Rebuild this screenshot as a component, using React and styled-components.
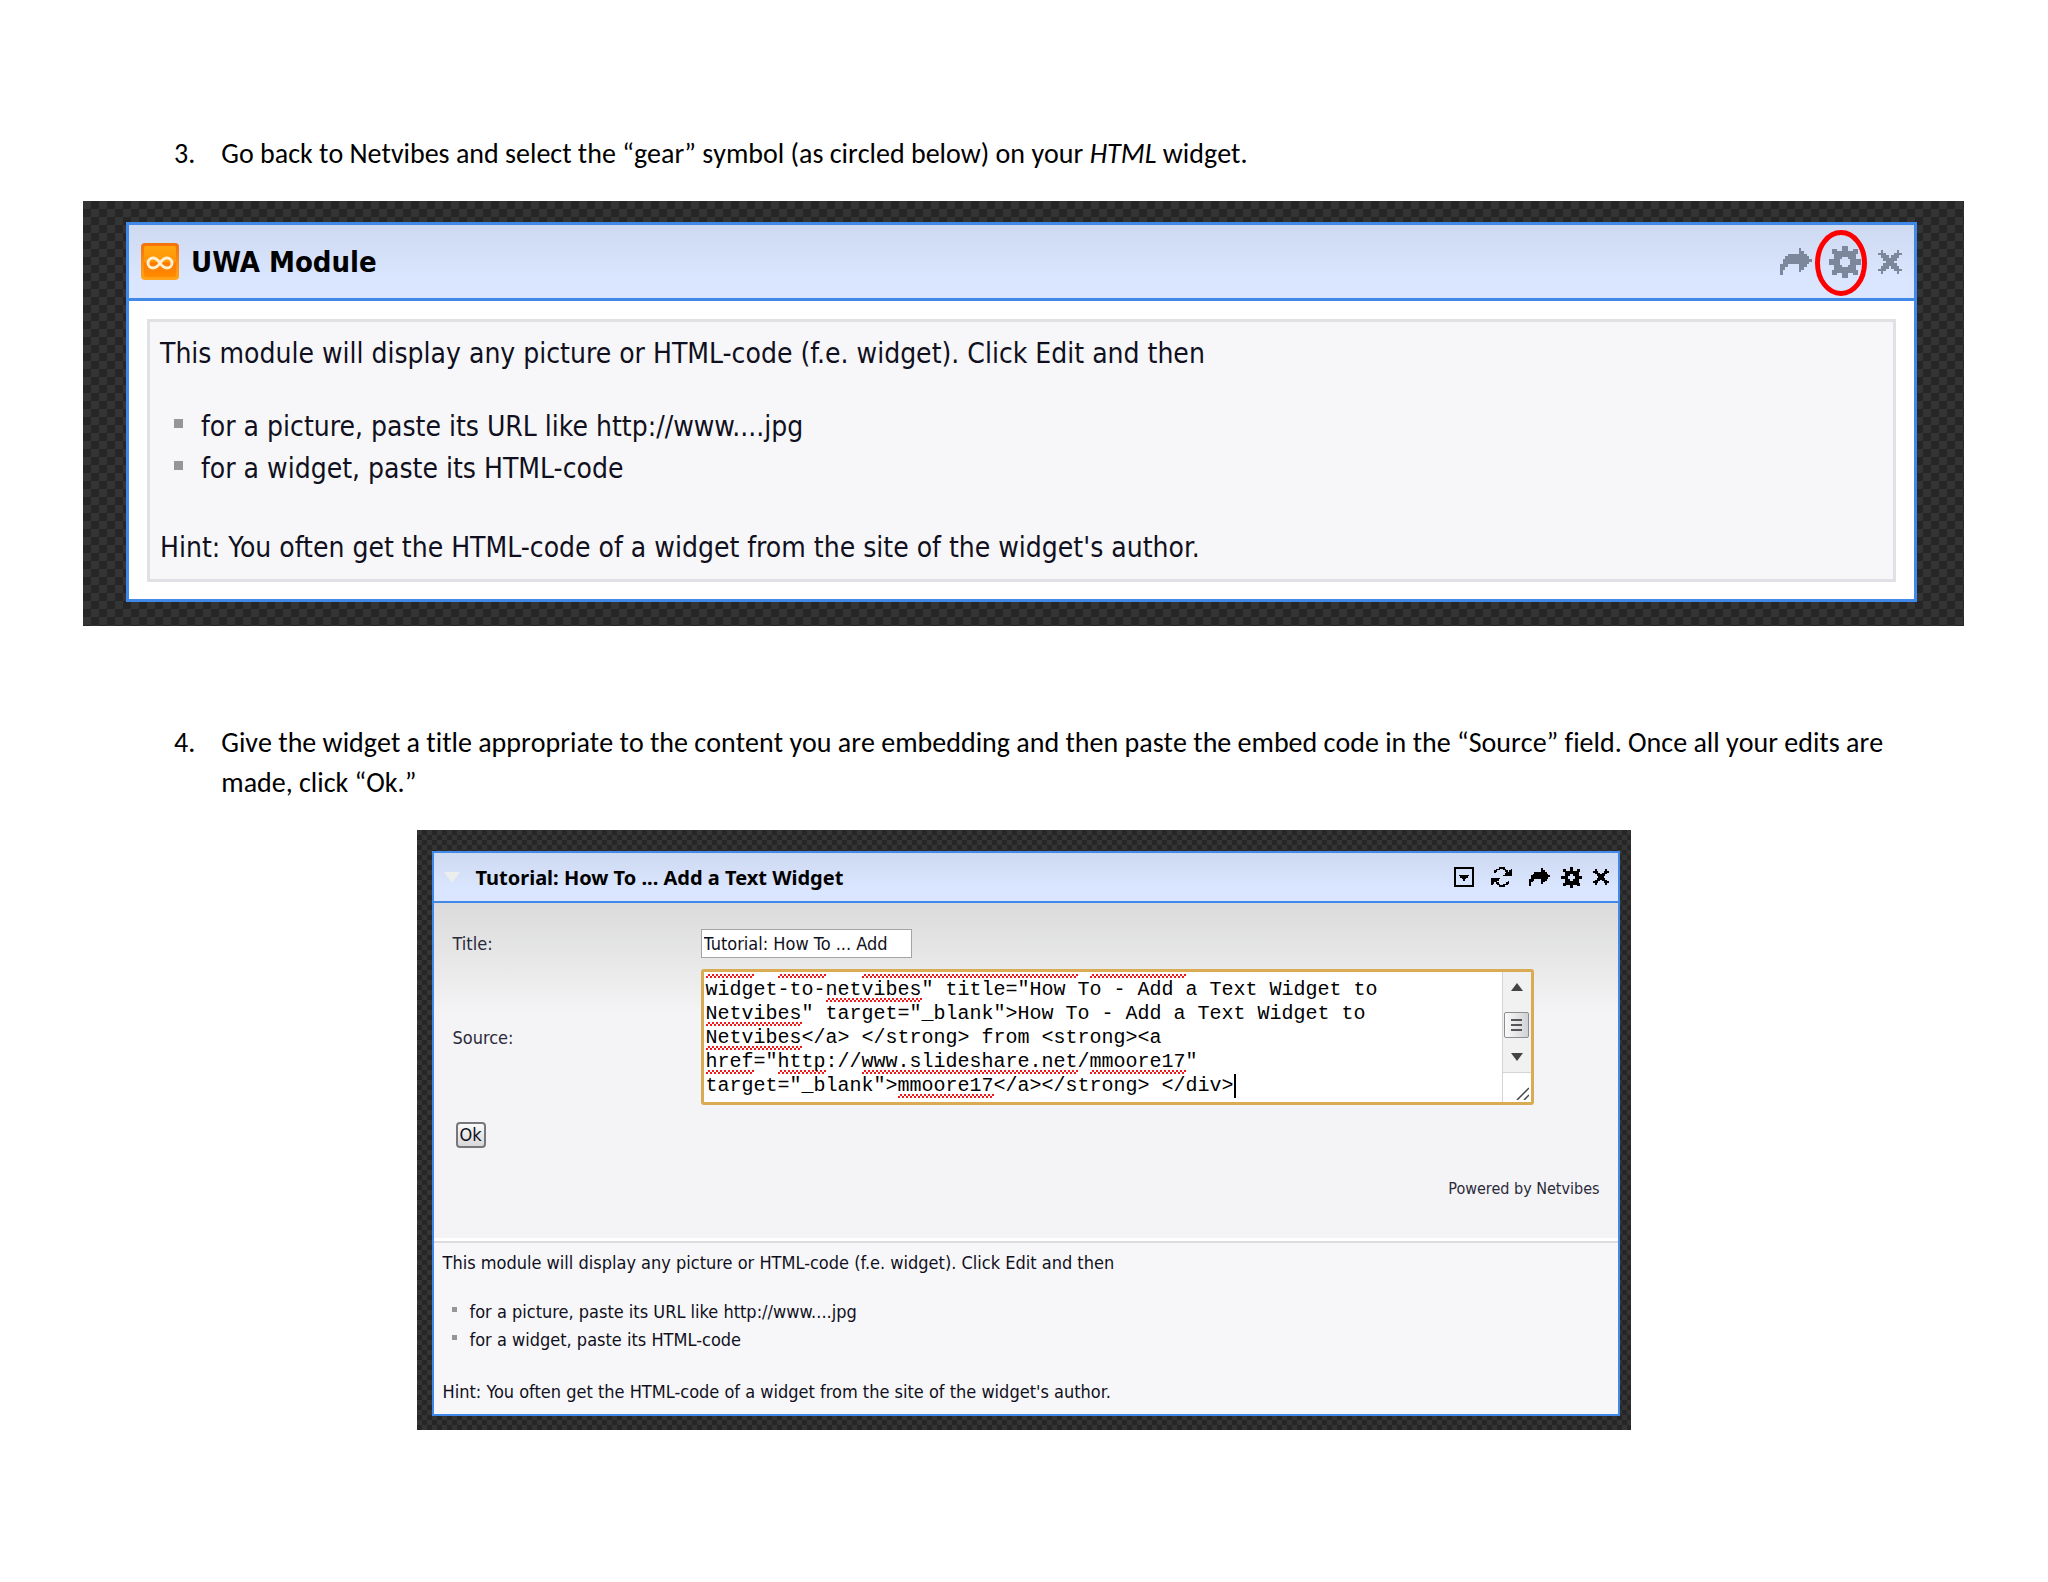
import React from 'react';
import styled, { createGlobalStyle } from 'styled-components';

const GlobalStyle = createGlobalStyle`
  * {
    box-sizing: border-box;
  }
  body {
    margin: 0;
    background: #fff;
    color: #000;
  }
`;

const uiFont = '"DejaVu Sans Condensed", "DejaVu Sans", sans-serif';

const Page = styled.main`
  padding: 134px 84px 150px 83px;
`;

const Step = styled.p`
  display: flex;
  gap: 26px;
  margin: ${({ $top }) => $top || 0}px 0 27px;
  padding: 0 40px 0 91px;
  font-family: Carlito, Calibri, Lato, sans-serif;
  font-size: 28px;
  line-height: 40px;
  font-kerning: none;
  font-variant-ligatures: none;
`;

const Desk = styled.section`
  --dark: #262626;
  --light: #343434;
  background: repeating-conic-gradient(
      var(--dark) 0 25%,
      var(--light) 0 50%
    )
    0 0 / ${({ $cell }) => $cell * 2}px ${({ $cell }) => $cell * 2}px;
`;

const ModuleDesk = styled(Desk)`
  padding: 21px 47px 24px 43px;
`;

const EditDesk = styled(Desk)`
  max-width: 1214px;
  margin: 0 auto;
  padding: 21px 11px 14px 15px;
`;

const Panel = styled.div`
  border: ${({ $line }) => $line}px solid #4189e8;
  background: #fff;
  font-family: ${uiFont};
`;

const Header = styled.header`
  display: flex;
  align-items: center;
  border-bottom: ${({ $line }) => $line}px solid #4189e8;
  background: linear-gradient(#cedaf0, #dae5ff 75%);
`;

const ModuleHeader = styled(Header)`
  height: 76px;
  gap: 12px;
  padding: 0 12px;
`;

const EditHeader = styled(Header)`
  height: 50px;
  gap: 16px;
  padding: 0 9px 0 10px;
`;

const Title = styled.h2`
  flex: 1;
  margin: 0;
  font-family: ${({ $font }) => $font};
  font-size: ${({ $size }) => $size}px;
  font-weight: bold;
`;

const Tools = styled.div`
  display: flex;
  align-items: center;
  gap: ${({ $gap }) => $gap}px;
  color: ${({ $color }) => $color};
`;

const IconButton = styled.button`
  position: relative;
  display: flex;
  padding: 0;
  border: none;
  background: none;
  color: inherit;
  cursor: pointer;
`;

const Ring = styled.svg`
  position: absolute;
  left: 50%;
  top: 50%;
  width: 52px;
  height: 66px;
  margin: -32px 0 0 -30px;
`;

const Note = styled.div`
  font-size: ${({ $size }) => $size}px;
  line-height: ${({ $line }) => $line}px;
  color: #101020;
  background: #f7f7f9;
  p,
  ul {
    margin: 0;
    padding: 0;
  }
  ul {
    list-style: none;
  }
  li {
    display: flex;
  }
  li::before {
    content: '';
    background: #969699;
  }
`;

const ModuleNote = styled(Note)`
  margin: 18px 18px 17px;
  padding: 11px 10px 10px;
  border: 3px solid #e0e1e5;
  ul {
    margin: 31px 0 37px 14px;
  }
  li::before {
    width: 9px;
    height: 9px;
    margin: 13px 18px 0 0;
  }
`;

const EditNote = styled(Note)`
  margin-top: 3px;
  padding: 6px 9px 8px;
  border-top: 2px solid #dcdce0;
  ul {
    margin: 21px 0 24px 9px;
  }
  li::before {
    width: 5px;
    height: 5px;
    margin: 9px 13px 0 0;
  }
`;

const Form = styled.form`
  display: grid;
  grid-template-columns: 248px minmax(0, 833px) 1fr;
  align-items: center;
  row-gap: 11px;
  padding: 26px 18px 35px 19px;
  font-size: 18px;
  color: #2a2a3a;
  background: linear-gradient(#dadbda, #f4f3f5 110px);
  label {
    grid-column: 1;
  }
`;

const TitleInput = styled.input`
  width: 211px;
  height: 29px;
  padding: 0 2px;
  border: 1px solid #a4a4a8;
  background: #fff;
  color: #101020;
  font-family: ${uiFont};
  font-size: 18px;
`;

const SourceBox = styled.div`
  display: flex;
  height: 136px;
  border: 3px solid #d9ab52;
  border-radius: 3px;
  background: #fff;
`;

// the textarea and its spelling marks share one grid cell and the same metrics
const SourceText = styled.div`
  display: grid;
  grid-template-rows: 100%;
  flex: 1;
  min-width: 0;
  overflow: hidden;
  font-family: 'Liberation Mono', monospace;
  font-size: 20px;
  line-height: 24px;
`;

const SpellMarks = styled.div`
  grid-area: 1 / 1;
  align-self: end;
  padding: 0 2px 4px;
`;

const MarkLine = styled.div`
  display: flex;
  height: 24px;
`;

const Mark = styled.span`
  background: ${({ $wrong }) =>
    $wrong
      ? 'repeating-conic-gradient(#f01818 0 25%, transparent 0 50%) 0 20px / 4px 4px repeat-x'
      : 'none'};
`;

const Caret = styled.span`
  width: 2px;
  background: #000;
`;

const SourceArea = styled.textarea`
  grid-area: 1 / 1;
  width: 100%;
  margin: 0;
  padding: 6px 2px 4px;
  border: none;
  outline: none;
  resize: none;
  overflow: hidden;
  background: none;
  color: #000;
  font: inherit;
  white-space: pre;
`;

const ScrollColumn = styled.div`
  display: flex;
  flex-direction: column;
  align-items: center;
  width: 29px;
  border-left: 1px solid #d4d4d6;
  background: #f1f1f1;
`;

const ScrollTrack = styled.div`
  display: flex;
  flex: 1;
  flex-direction: column;
  align-items: center;
  justify-content: space-between;
  padding: 11px 0;
`;

const Thumb = styled.div`
  display: flex;
  flex-direction: column;
  justify-content: center;
  gap: 3px;
  width: 25px;
  height: 26px;
  margin-top: 6px;
  padding: 0 6px;
  border: 1px solid #8d8d91;
  border-radius: 2px;
  background: linear-gradient(90deg, #fafafa, #d2d2d6);
  i {
    height: 2px;
    background: #55555a;
  }
`;

const ResizeCorner = styled.div`
  display: flex;
  align-items: flex-end;
  justify-content: flex-end;
  width: 100%;
  height: 30px;
  padding: 2px;
  border-top: 1px solid #d4d4d6;
  background: #fff;
`;

const OkButton = styled.button`
  grid-column: 1;
  justify-self: start;
  height: 26px;
  margin: 6px 3px 0;
  padding: 0 2px;
  border: 2px solid #77777b;
  border-radius: 4px;
  background: linear-gradient(#fafafa, #d8d8da);
  color: #101020;
  font-family: ${uiFont};
  font-size: 18px;
  line-height: 22px;
`;

const Powered = styled.p`
  grid-column: 1 / -1;
  justify-self: end;
  margin: 16px 0 0;
  font-size: 16px;
  line-height: 28px;
`;

const icons = {
  share: [
    '.......X....',
    '.......XX...',
    '...XXXXXXX..',
    '..XXXXXXXXX.',
    '.XXXXXXXXXXX',
    '.XXXXXXXXXX.',
    'XXX....XXX..',
    'XX.....XX...',
    'X......X....',
    'X...........',
  ],
  gear: [
    '.....XX.....',
    '.XX..XX..XX.',
    '.XXXXXXXXXX.',
    '..XXXXXXXX..',
    '..XXX..XXX..',
    'XXXX....XXXX',
    'XXXX....XXXX',
    '..XXX..XXX..',
    '..XXXXXXXX..',
    '.XXXXXXXXXX.',
    '.XX..XX..XX.',
    '.....XX.....',
  ],
  close: [
    '.X.....X.',
    'XXX...XXX',
    '.XXX.XXX.',
    '..XXXXX..',
    '...XXX...',
    '..XXXXX..',
    '.XXX.XXX.',
    'XXX...XXX',
    '.X.....X.',
  ],
  menu: [
    'XXXXXXXXXXXXX',
    'X...........X',
    'X...........X',
    'X...........X',
    'X...........X',
    'X..XXXXXXX..X',
    'X...XXXXX...X',
    'X....XXX....X',
    'X.....X.....X',
    'X...........X',
    'X...........X',
    'X...........X',
    'XXXXXXXXXXXXX',
  ],
  refresh: [
    '.....XXXX.....',
    '...XXX..XX...X',
    '..XX.....XX.XX',
    '..X.......XXXX',
    '.........XXXXX',
    '........XXXXXX',
    '..............',
    'XXXXXX........',
    'XXXXX.........',
    'XXXX.......X..',
    'XX.XX.....XX..',
    'X...XX..XXX...',
    '.....XXXX.....',
  ],
};

const PixelIcon = ({ name, width }) => {
  const rows = icons[name];
  const cols = rows[0].length;
  const d = rows
    .map((row, y) =>
      [...row].map((c, x) => (c === 'X' ? `M${x} ${y}h1v1h-1z` : '')).join('')
    )
    .join('');
  return (
    <svg
      width={width}
      height={Math.round((width * rows.length) / cols)}
      viewBox={`0 0 ${cols} ${rows.length}`}
      shapeRendering='crispEdges'
      fill='currentColor'
    >
      <path d={d} />
    </svg>
  );
};

const Tool = ({ name, label, width, children }) => (
  <IconButton type='button' aria-label={label}>
    <PixelIcon name={name} width={width} />
    {children}
  </IconButton>
);

const UwaLogo = () => (
  <svg width='38' height='37' viewBox='0 0 38 37'>
    <defs>
      <linearGradient id='uwa' x1='0' y1='0' x2='0' y2='1'>
        <stop offset='0' stopColor='#ffa30c' />
        <stop offset='0.5' stopColor='#ff9508' />
        <stop offset='0.55' stopColor='#ff7a00' />
        <stop offset='1' stopColor='#ff8c00' />
      </linearGradient>
      <linearGradient id='uwaEdge' x1='0' y1='0' x2='0' y2='1'>
        <stop offset='0' stopColor='#f5700a' />
        <stop offset='1' stopColor='#ffa51a' />
      </linearGradient>
    </defs>
    <rect width='38' height='37' rx='4' fill='url(#uwaEdge)' />
    <rect x='3' y='3' width='32' height='31' rx='2' fill='url(#uwa)' />
    <path
      d='M19 20c-2-3-4-5-7-5a5 5 0 0 0 0 10c3 0 5-2 7-5s4-5 7-5a5 5 0 0 1 0 10c-3 0-5-2-7-5z'
      fill='none'
      stroke='#fff0d0'
      strokeWidth='3'
    />
  </svg>
);

const noteText = (
  <>
    <p>
      This module will display any picture or HTML-code (f.e. widget). Click
      Edit and then
    </p>
    <ul>
      <li>for a picture, paste its URL like http://www....jpg</li>
      <li>for a widget, paste its HTML-code</li>
    </ul>
    <p>
      Hint: You often get the HTML-code of a widget from the site of the
      widget's author.
    </p>
  </>
);

const source = [
  'widget-to-netvibes" title="How To - Add a Text Widget to',
  'Netvibes" target="_blank">How To - Add a Text Widget to',
  'Netvibes</a> </strong> from <strong><a',
  'href="http://www.slideshare.net/mmoore17"',
  'target="_blank">mmoore17</a></strong> </div>',
];

const unknownWords =
  /(href|http|www\.slideshare\.net|mmoore17|netvibes|Netvibes)/;

const markedLines = [source[3], ...source];

const SourceField = () => (
  <SourceBox>
    <SourceText>
      <SpellMarks aria-hidden='true'>
        {markedLines.map((line, n) => (
          <MarkLine key={n}>
            {line.split(unknownWords).map((part, i) => (
              <Mark
                key={i}
                $wrong={i % 2 === 1}
                style={{ width: `${part.length}ch` }}
              />
            ))}
            {n === markedLines.length - 1 && <Caret />}
          </MarkLine>
        ))}
      </SpellMarks>
      <SourceArea
        id='source'
        wrap='off'
        spellCheck={false}
        defaultValue={source.join('\n')}
      />
    </SourceText>
    <ScrollColumn>
      <ScrollTrack>
        <svg width='12' height='8' viewBox='0 0 12 8'>
          <path d='M6 0l6 8H0z' fill='#444' />
        </svg>
        <Thumb>
          <i />
          <i />
          <i />
        </Thumb>
        <svg width='12' height='8' viewBox='0 0 12 8'>
          <path d='M6 8l6-8H0z' fill='#444' />
        </svg>
      </ScrollTrack>
      <ResizeCorner>
        <svg width='13' height='13' viewBox='0 0 13 13'>
          <path d='M1 13L13 1M8 13l5-5' stroke='#444' strokeWidth='1.5' />
        </svg>
      </ResizeCorner>
    </ScrollColumn>
  </SourceBox>
);

const ModuleWidget = () => (
  <ModuleDesk $cell={8}>
    <Panel $line={3}>
      <ModuleHeader $line={3}>
        <UwaLogo />
        <Title $font={uiFont} $size={29}>
          UWA Module
        </Title>
        <Tools $gap={17} $color='#7c879b'>
          <Tool name='share' label='Share' width={32} />
          <Tool name='gear' label='Edit' width={32}>
            <Ring viewBox='0 0 52 66'>
              <ellipse
                cx='26'
                cy='33'
                rx='23.5'
                ry='30.5'
                fill='none'
                stroke='#f00'
                strokeWidth='5'
              />
            </Ring>
          </Tool>
          <Tool name='close' label='Close' width={24} />
        </Tools>
      </ModuleHeader>
      <ModuleNote $size={28} $line={42}>
        {noteText}
      </ModuleNote>
    </Panel>
  </ModuleDesk>
);

const EditWidget = () => (
  <EditDesk $cell={5}>
    <Panel $line={2}>
      <EditHeader $line={2}>
        <svg width='16' height='11' viewBox='0 0 16 11'>
          <path d='M0 0h16L8 11z' fill='#eceeed' />
        </svg>
        <Title $font='"Noto Sans", sans-serif' $size={20}>
          Tutorial: How To ... Add a Text Widget
        </Title>
        <Tools $gap={17} $color='#000'>
          <Tool name='menu' label='Menu' width={20} />
          <Tool name='refresh' label='Refresh' width={21} />
          <Tools $gap={11} $color='#000'>
            <Tool name='share' label='Share' width={21} />
            <Tool name='gear' label='Edit' width={21} />
            <Tool name='close' label='Close' width={16} />
          </Tools>
        </Tools>
      </EditHeader>
      <Form onSubmit={e => e.preventDefault()}>
        <label htmlFor='title'>Title:</label>
        <TitleInput id='title' defaultValue='Tutorial: How To ... Add' />
        <label htmlFor='source'>Source:</label>
        <SourceField />
        <OkButton type='submit'>Ok</OkButton>
        <Powered>Powered by Netvibes</Powered>
      </Form>
      <EditNote $size={18} $line={28}>
        {noteText}
      </EditNote>
    </Panel>
  </EditDesk>
);

const App = () => (
  <>
    <GlobalStyle />
    <Page>
      <Step>
        <span>3.</span>
        <span>
          Go back to Netvibes and select the “gear” symbol (as circled below) on
          your <em>HTML</em> widget.
        </span>
      </Step>
      <ModuleWidget />
      <Step $top={97}>
        <span>4.</span>
        <span>
          Give the widget a title appropriate to the content you are embedding
          and then paste the embed code in the “Source” field. Once all your
          edits are made, click “Ok.”
        </span>
      </Step>
      <EditWidget />
    </Page>
  </>
);

export default App;
